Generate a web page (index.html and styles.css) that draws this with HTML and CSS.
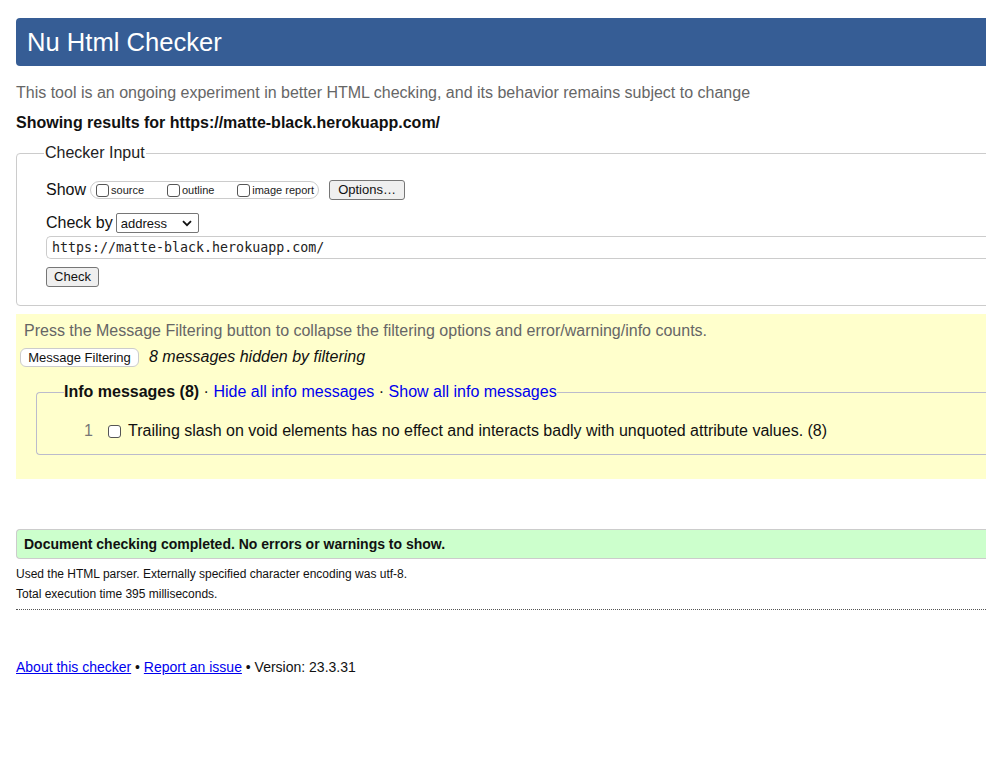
FILE: index.html
```html
<!DOCTYPE html>
<html lang="en">
<head>
<meta charset="utf-8">
<title>Nu Html Checker</title>
<link rel="stylesheet" href="styles.css">
</head>
<body>
<div class="page">
  <h1 class="title">Nu Html Checker</h1>
  <p class="intro">This tool is an ongoing experiment in better HTML checking, and its behavior remains subject to change</p>
  <p class="showing">Showing results for https://matte-black.herokuapp.com/</p>

  <fieldset class="input">
    <legend class="input-legend">Checker Input</legend>
    <div class="row show-row">
      <span class="lbl">Show</span>
      <span class="opts">
        <label class="opt"><input type="checkbox" class="cb">source</label>
        <label class="opt"><input type="checkbox" class="cb">outline</label>
        <label class="opt"><input type="checkbox" class="cb">image report</label>
      </span>
      <button class="btn options">Options…</button>
    </div>
    <div class="row by-row">
      <span class="lbl">Check by</span>
      <span class="select">address<svg class="chev" width="10" height="7" viewBox="0 0 10 7"><path d="M1 1.2 L5 5.2 L9 1.2" fill="none" stroke="#111" stroke-width="1.8"/></svg></span>
    </div>
    <div class="url">https://matte-black.herokuapp.com/</div>
    <button class="btn check">Check</button>
  </fieldset>

  <section class="filters">
    <p class="press">Press the Message Filtering button to collapse the filtering options and error/warning/info counts.</p>
    <div class="filter-row">
      <button class="mf">Message Filtering</button>
      <em class="hidden-note">8 messages hidden by filtering</em>
    </div>
    <fieldset class="info">
      <legend class="info-legend"><strong>Info messages (8)</strong> · <a href="#">Hide all info messages</a> · <a href="#">Show all info messages</a></legend>
      <div class="msg">
        <span class="num">1</span>
        <input type="checkbox" class="cb msg-cb">
        <span class="msg-text">Trailing slash on void elements has no effect and interacts badly with unquoted attribute values. (8)</span>
      </div>
    </fieldset>
  </section>

  <p class="success">Document checking completed. No errors or warnings to show.</p>
  <p class="small first">Used the HTML parser. Externally specified character encoding was utf-8.</p>
  <p class="small">Total execution time 395 milliseconds.</p>
  <hr class="dots">

  <p class="footer"><a href="#">About this checker</a> • <a href="#">Report an issue</a> • Version: 23.3.31</p>
</div>
</body>
</html>
```

FILE: styles.css
```css
html, body {
  margin: 0;
  padding: 0;
  overflow: hidden;
  background: #fff;
}
body {
  font-family: "Liberation Sans", Arial, Helvetica, sans-serif;
  color: #111;
}
.page {
  width: 1010px;
  padding: 18px 0 0 16px;
}
.title {
  margin: 0;
  height: 48px;
  line-height: 48px;
  padding-left: 11px;
  background: #365d95;
  color: #fff;
  font-size: 25.6px;
  font-weight: normal;
  border-radius: 4px 0 0 4px;
}
.intro {
  margin: 17px 0 0;
  font-size: 16px;
  line-height: 20px;
  color: #666;
}
.showing {
  margin: 10px 0 0;
  font-size: 16px;
  line-height: 20px;
  font-weight: bold;
  color: #111;
}
.input {
  margin: 10px 0 0;
  padding: 0 0 18px 29px;
  border: 1px solid #ccc;
  border-radius: 4px;
}
.input-legend {
  padding: 0 1px;
  margin-left: -2px;
  font-size: 16px;
  line-height: 20px;
  color: #222;
}
.row {
  display: flex;
  align-items: center;
  font-size: 16px;
}
.show-row {
  margin-top: 17px;
  height: 20px;
}
.lbl {
  line-height: 20px;
}
.opts {
  display: flex;
  align-items: center;
  height: 18px;
  margin-left: 4px;
  padding: 0 4px 0 5px;
  border: 1px solid #ccc;
  border-radius: 9px;
  font-size: 11px;
  box-sizing: border-box;
  width: 229px;
  justify-content: space-between;
}
.opt {
  display: flex;
  align-items: center;
  color: #222;
}
.cb {
  width: 13px;
  height: 13px;
  margin: 0 2px 0 0;
  appearance: none;
  border: 1px solid #555;
  border-radius: 3px;
  background: #fff;
  box-sizing: border-box;
}
.btn {
  font-family: "Liberation Sans", Arial, sans-serif;
  font-size: 13px;
  color: #111;
  background: #efefef;
  border: 1px solid #767676;
  border-radius: 3px;
  padding: 0 7px;
  height: 20px;
  line-height: 18px;
}
.options {
  margin-left: 10px;
  width: 76px;
}
.by-row {
  margin-top: 13px;
  height: 20px;
}
.select {
  display: inline-flex;
  align-items: center;
  justify-content: space-between;
  margin-left: 3px;
  width: 83px;
  height: 20px;
  box-sizing: border-box;
  border: 1px solid #767676;
  border-radius: 2px;
  padding: 0 6px 0 4px;
  font-size: 13px;
  color: #111;
}
.chev {
  display: block;
}
.url {
  margin-top: 3px;
  height: 23px;
  box-sizing: border-box;
  border: 1px solid #ccc;
  border-right: none;
  border-radius: 5px 0 0 5px;
  padding-left: 5px;
  font-family: "DejaVu Sans Mono", "Liberation Mono", monospace;
  font-size: 13.3px;
  line-height: 21px;
  color: #222;
}
.check {
  margin-top: 8px;
  width: 53px;
  padding: 0;
}
.filters {
  margin-top: 8px;
  background: #ffffcc;
  padding: 7px 0 24px 0;
}
.press {
  margin: 0 0 0 8px;
  font-size: 16px;
  line-height: 20px;
  color: #666;
}
.filter-row {
  display: flex;
  align-items: center;
  margin-top: 6px;
  padding-left: 4px;
  height: 20px;
}
.mf {
  font-family: "Liberation Sans", Arial, sans-serif;
  font-size: 13px;
  color: #111;
  background: #fff;
  border: 1px solid #ccc;
  border-radius: 6px;
  height: 19px;
  width: 119px;
  padding: 0;
}
.hidden-note {
  margin-left: 10px;
  font-size: 16px;
  color: #111;
}
.info {
  margin: 15px 0 0 20px;
  padding: 0 0 13px 0;
  border: 1px solid #bbc;
  border-right: none;
  border-radius: 4px 0 0 4px;
}
.info-legend {
  margin-left: 27px;
  padding: 0;
  font-size: 16px;
  line-height: 20px;
  color: #111;
}
.info-legend a {
  color: #0000ee;
  text-decoration: none;
}
.msg {
  display: flex;
  align-items: center;
  margin-top: 19px;
  font-size: 16px;
  line-height: 20px;
}
.num {
  width: 56px;
  text-align: right;
  color: #777;
}
.msg-cb {
  margin-left: 15px;
  margin-right: 7px;
}
.msg-text {
  color: #111;
}
.success {
  margin: 50px 0 0;
  height: 30px;
  box-sizing: border-box;
  line-height: 28px;
  background: #ccffcc;
  border: 1px solid #ccc;
  border-right: none;
  border-radius: 4px 0 0 4px;
  padding-left: 7px;
  font-size: 14px;
  font-weight: bold;
  color: #111;
}
.small {
  margin: 6px 0 0;
  font-size: 12px;
  line-height: 14px;
  color: #111;
}
.first {
  margin-top: 8px;
}
.dots {
  margin: 8px 0 0;
  border: none;
  border-top: 1px dotted #555;
  height: 0;
}
.footer {
  margin: 49px 0 0;
  font-size: 14px;
  line-height: 16px;
  color: #111;
}
.footer a {
  color: #0000ee;
}
```
